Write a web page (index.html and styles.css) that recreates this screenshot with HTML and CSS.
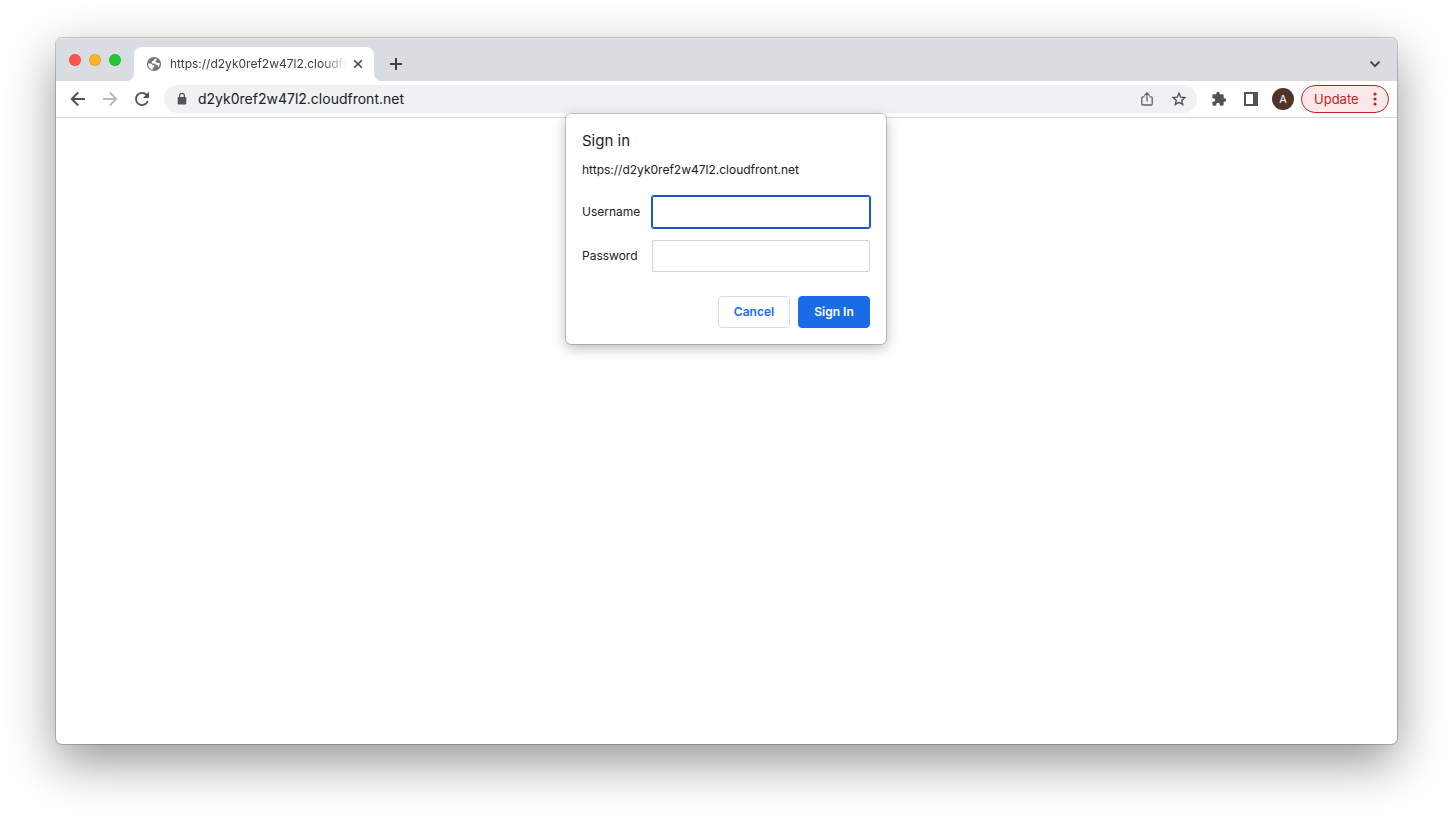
FILE: index.html
```html
<!DOCTYPE html>
<html lang="en">
<head>
  <meta charset="UTF-8" />
  <meta name="viewport" content="width=device-width, initial-scale=1.0" />
  <title>Sign in</title>
  <link rel="stylesheet" href="styles.css">
</head>
<body>

  <div class="window">
    <header class="tab-strip">
      <div class="lights">
        <button class="light red" aria-label="Close window"></button>
        <button class="light yellow" aria-label="Minimize window"></button>
        <button class="light green" aria-label="Zoom window"></button>
      </div>
      <div class="tab">
        <svg width="16" height="16" viewBox="0 0 16 16" aria-hidden="true">
          <circle cx="8" cy="8" r="7.1" fill="#757575" />
          <path d="M10.800 2.300 8.200 3.200 7.400 5 5.800 5.600v2h3l1.300 1.500h1.500l.5 1.800 1.200-1.200.5-2.700h-2.300L10 5.800 8.900 5.400l1.600-1z" fill="#fff" />
          <path d="M2.200 7.400h2.500l2.100 1.900h1.500v1.700l-1.600 1.100v1.600C4 13.300 2.100 10.900 2.200 7.400z" fill="#fff" />
        </svg>
        <span class="tab-title">https://d2yk0ref2w47l2.cloudfront.net</span>
        <button class="tab-close" aria-label="Close tab">
          <svg width="16" height="16" viewBox="0 0 16 16"><path d="M4.2 4.2l7.6 7.6M11.8 4.2l-7.6 7.6" fill="none" stroke="#3c4043" stroke-width="1.6" /></svg>
        </button>
      </div>
      <button class="icon-btn new-tab" aria-label="New tab">
        <svg width="16" height="16" viewBox="0 0 16 16"><path d="M8 2v12M2 8h12" fill="none" stroke="#3c4043" stroke-width="2" /></svg>
      </button>
      <button class="icon-btn tab-search" aria-label="Search tabs">
        <svg width="16" height="16" viewBox="0 0 16 16"><path d="M3.5 5.7 8 10.2l4.5-4.5" fill="none" stroke="#3c4043" stroke-width="1.8" /></svg>
      </button>
    </header>

    <nav class="toolbar">
      <button class="icon-btn" aria-label="Back">
        <svg width="20" height="20" viewBox="0 0 20 20"><path d="M17 10H4M10.2 3.5 3.7 10l6.5 6.5" fill="none" stroke="#50545a" stroke-width="1.9" /></svg>
      </button>
      <button class="icon-btn" aria-label="Forward" disabled>
        <svg width="20" height="20" viewBox="0 0 20 20"><path d="M3 10h13M9.8 3.5l6.5 6.5-6.5 6.5" fill="none" stroke="#b8babc" stroke-width="1.9" /></svg>
      </button>
      <button class="icon-btn" aria-label="Reload">
        <svg width="20" height="20" viewBox="0 0 20 20">
          <path d="M15.8 12A6.1 6.1 0 1 1 14.6 5.9L16 7.5" fill="none" stroke="#50545a" stroke-width="1.9" />
          <path d="M17 2.8v6.1h-6.1z" fill="#50545a" />
        </svg>
      </button>
      <div class="omnibox">
        <svg width="16" height="16" viewBox="0 0 16 16" aria-hidden="true">
          <rect x="3.7" y="6" width="8.6" height="7.6" rx="1" fill="#50545a" />
          <path d="M5.6 6.5V4.7a2.4 2.4 0 0 1 4.8 0v1.8" fill="none" stroke="#50545a" stroke-width="1.2" />
        </svg>
        <input class="address" type="text" aria-label="Address" value="d2yk0ref2w47l2.cloudfront.net" />
        <button class="icon-btn" aria-label="Share">
          <svg width="16" height="16" viewBox="0 0 16 16"><path d="M5.5 5.8H3.8a1 1 0 0 0-1 1V13a1 1 0 0 0 1 1h8.4a1 1 0 0 0 1-1V6.8a1 1 0 0 0-1-1h-1.700M8 10.5V2M5.3 4.6 8 1.900l2.7 2.7" fill="none" stroke="#5f6368" stroke-width="1.3" /></svg>
        </button>
        <button class="icon-btn" aria-label="Bookmark this tab">
          <svg width="16" height="16" viewBox="0 0 16 16"><path d="M8 2.3l1.700 3.900 4.200.4-3.200 2.800 1 4.100L8 11.400l-3.700 2.100 1-4.100-3.200-2.800 4.200-.4z" fill="none" stroke="#50545a" stroke-width="1.4" /></svg>
        </button>
      </div>
      <button class="icon-btn" aria-label="Extensions">
        <svg width="16" height="16" viewBox="0 0 24 24"><path d="M20.5 11H19V7c0-1.1-.9-2-2-2h-4V3.5a2.5 2.5 0 0 0-5 0V5H4c-1.1 0-2 .9-2 2v3.8h1.5a2.7 2.7 0 0 1 0 5.4H2V20c0 1.1.9 2 2 2h3.8v-1.5a2.7 2.7 0 0 1 5.4 0V22H17c1.1 0 2-.9 2-2v-4h1.5a2.5 2.5 0 0 0 0-5z" fill="#50545a" /></svg>
      </button>
      <button class="icon-btn" aria-label="Side panel">
        <svg width="16" height="16" viewBox="0 0 16 16"><path d="M1 1h14v14H1zM3 3v10h7V3z" fill="#50545a" fill-rule="evenodd" /></svg>
      </button>
      <button class="icon-btn" aria-label="Profile"><span class="avatar">A</span></button>
      <button class="update">
        Update
        <svg width="4" height="14" viewBox="0 0 4 14" aria-hidden="true">
          <circle cx="2" cy="2" r="1.6" /><circle cx="2" cy="7" r="1.6" /><circle cx="2" cy="12" r="1.6" />
        </svg>
      </button>
    </nav>

    <main class="page">
      <form class="dialog" role="dialog" aria-labelledby="dialog-title">
        <h1 id="dialog-title">Sign in</h1>
        <p class="origin">https://d2yk0ref2w47l2.cloudfront.net</p>
        <div class="fields">
          <label for="username">Username</label>
          <input class="active" type="text" id="username" name="username" />
          <label for="password">Password</label>
          <input type="password" id="password" name="password" />
        </div>
        <div class="actions">
          <button type="button">Cancel</button>
          <button type="submit" class="primary">Sign In</button>
        </div>
      </form>
    </main>
  </div>

</body>
</html>
```
FILE: styles.css
```css
* {
  box-sizing: border-box;
}

body {
  display: flex;
  min-height: 100vh;
  margin: 0;
  padding: 38px 56px 74px;
  background: #fff;
  color: #202124;
  font-family: Inter, "Liberation Sans", sans-serif;
  font-size: 12px;
  line-height: 16px;
}

button,
input {
  margin: 0;
  padding: 0;
  border: none;
  background: none;
  color: inherit;
  font: inherit;
}

svg {
  display: block;
  flex: none;
}

.window {
  display: flex;
  flex: 1;
  flex-direction: column;
  min-width: 0;
  border-radius: 6px;
  background: #fff;
  box-shadow: 0 0 0 1px rgba(0, 0, 0, 0.2), 0 18px 50px rgba(0, 0, 0, 0.42);
}

/* tabs */

.tab-strip {
  display: flex;
  align-items: flex-end;
  height: 43px;
  padding-right: 8px;
  border-top: 1px solid #e6e8eb;
  border-radius: 6px 6px 0 0;
  background: #d9dce1;
}

.lights {
  display: flex;
  align-self: center;
  gap: 8px;
  width: 78px;
  padding-left: 13px;
}

.light {
  width: 12px;
  height: 12px;
  border: 1px solid rgba(0, 0, 0, 0.1);
  border-radius: 50%;
}

.red {
  background: #ff544d;
}

.yellow {
  background: #fdb429;
}

.green {
  background: #25c63a;
}

.tab {
  position: relative;
  display: flex;
  align-items: center;
  width: 240px;
  height: 34px;
  padding: 0 8px 0 12px;
  border-radius: 8px 8px 0 0;
  background: #fff;
}

/* flared feet of the tab */
.tab::before,
.tab::after {
  content: "";
  position: absolute;
  bottom: 0;
  width: 8px;
  height: 8px;
}

.tab::before {
  right: 100%;
  background: radial-gradient(circle at 0 0, transparent 8px, #fff 8px);
}

.tab::after {
  left: 100%;
  background: radial-gradient(circle at 100% 0, transparent 8px, #fff 8px);
}

.tab-title {
  flex: 1;
  margin: 0 4px 0 8px;
  overflow: hidden;
  color: #3c4043;
  white-space: nowrap;
  -webkit-mask-image: linear-gradient(to left, transparent, #000 24px);
  mask-image: linear-gradient(to left, transparent, #000 24px);
}

.icon-btn {
  display: flex;
  flex: none;
  align-items: center;
  justify-content: center;
  width: 28px;
  height: 28px;
  border-radius: 50%;
}

.new-tab {
  margin: 0 auto 3px 8px;
}

.tab-search {
  margin-bottom: 3px;
}

/* toolbar */

.toolbar {
  display: flex;
  align-items: center;
  gap: 4px;
  padding: 4px 8px;
  border-bottom: 1px solid #d5d7da;
}

.omnibox {
  display: flex;
  flex: 1;
  align-items: center;
  gap: 4px;
  height: 28px;
  margin: 0 4px;
  padding: 0 4px 0 10px;
  border-radius: 14px;
  background: #eff1f3;
}

.address {
  flex: 1;
  min-width: 0;
  margin-left: 4px;
  font-size: 14px;
  outline: none;
}

.avatar {
  width: 22px;
  height: 22px;
  border-radius: 50%;
  background: #50342c;
  color: #fff;
  font-size: 11px;
  line-height: 22px;
}

.update {
  display: flex;
  align-items: center;
  justify-content: space-between;
  width: 88px;
  height: 28px;
  padding: 0 11px 0 12px;
  border: 1px solid #c5221f;
  border-radius: 14px;
  background: #fae9e8;
  color: #c5221f;
  font-size: 13px;
  fill: #c5221f;
}

/* sign in dialog */

.page {
  position: relative;
  flex: 1;
}

.dialog {
  position: absolute;
  top: -4px;
  right: 1px;
  left: 0;
  width: 320px;
  margin: 0 auto;
  padding: 16px;
  border-radius: 5px;
  background: #fff;
  box-shadow: 0 0 0 1px rgba(0, 0, 0, 0.18), 0 4px 14px rgba(0, 0, 0, 0.28);
}

.dialog h1 {
  margin: 0 0 8px;
  font-size: 15px;
  font-weight: 400;
  line-height: 22px;
}

.origin {
  margin: 0 0 16px;
  line-height: 20px;
}

.fields {
  display: grid;
  grid-template-columns: 58px 1fr;
  align-items: center;
  gap: 12px;
}

.fields input {
  width: 100%;
  height: 32px;
  padding: 0 8px;
  border: 1px solid #d3d5d9;
  border-radius: 2px;
  outline: none;
}

.fields input.active,
.fields input:focus {
  border-color: #185abc;
  box-shadow: 0 0 0 1px #185abc;
}

.actions {
  display: flex;
  justify-content: flex-end;
  gap: 8px;
  margin-top: 24px;
}

.actions button {
  width: 72px;
  height: 32px;
  border: 1px solid #dadce0;
  border-radius: 4px;
  color: #1a6be6;
  font-weight: 600;
}

.actions .primary {
  border-color: #1a6be6;
  background: #1a6be6;
  color: #fff;
}
```
